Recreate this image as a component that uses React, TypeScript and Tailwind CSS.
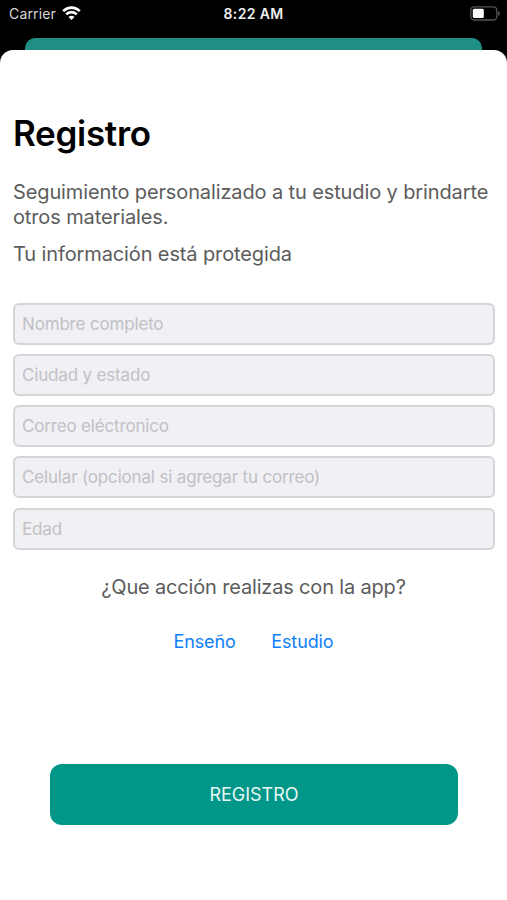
const fields = [
  { name: "name", label: "Nombre completo" },
  { name: "city", label: "Ciudad y estado" },
  { name: "email", label: "Correo eléctronico" },
  { name: "phone", label: "Celular (opcional si agregar tu correo)" },
  { name: "age", label: "Edad" },
];

export default function App() {
  return (
    <div className="flex h-[900px] w-[507px] flex-col overflow-hidden bg-black font-[Inter,sans-serif]">
      <StatusBar />

      {/* Edge of the screen behind the sheet */}
      <div className="mx-[25px] mt-[10px] h-[12px] shrink-0 rounded-t-[10px] bg-[#1f8f83]" />

      <main className="flex-1 rounded-t-[13px] bg-white px-[13px] pt-[61px]">
        <h1 className="text-[35px] leading-[44px] font-semibold tracking-[-0.3px] text-black">Registro</h1>

        <div className="mt-[25px] text-[20px] leading-[24.5px] tracking-[-0.12px] whitespace-nowrap text-[#5c5c5c]">
          <p>
            Seguimiento personalizado a tu estudio y brindarte
            <br />
            otros materiales.
          </p>
          <p className="mt-[13px]">Tu información está protegida</p>
        </div>

        <form>
          <div className="mt-[36px] flex flex-col gap-[9.3px]">
            {fields.map((field) => (
              <Field key={field.name} name={field.name} label={field.label} />
            ))}
          </div>

          <p className="mt-[25.5px] text-center text-[20px] leading-[25px] tracking-[-0.17px] text-[#5c5c5c]">
            ¿Que acción realizas con la app?
          </p>
          <div className="mt-[30px] flex justify-center gap-[35.5px] text-[18px] leading-[24px] tracking-[-0.1px] text-[#0f80fa]">
            <button type="button">Enseño</button>
            <button type="button">Estudio</button>
          </div>

          <button
            type="button"
            className="mx-[37px] mt-[110px] h-[61px] w-[408px] rounded-[12px] bg-[#009688] text-[18px] text-[#e9f7f5]"
          >
            REGISTRO
          </button>
        </form>
      </main>
    </div>
  );
}

function StatusBar() {
  return (
    <header className="grid h-[28px] shrink-0 grid-cols-3 items-center pr-[6px] pb-[2px] pl-[9px] text-white">
      <div className="flex items-center gap-[6px]">
        <span className="text-[14px] tracking-[0.15px] text-[#d8d8d8]">Carrier</span>
        <WifiIcon />
      </div>
      <span className="pr-[3px] text-center text-[14px] font-semibold tracking-[0.35px] text-[#eeeeee]">8:22 AM</span>
      <div className="flex justify-end">
        <BatteryIcon />
      </div>
    </header>
  );
}

function Field({ name, label }: { name: string, label: string }) {
  return (
    <input
      name={name}
      placeholder={label}
      className="h-[42px] w-[482px] rounded-[6px] border-2 border-[#d5d5d7] bg-[#f0f0f5] px-[7px] text-[17px] tracking-[-0.17px] placeholder:text-[#c1c1c5]"
    />
  );
}

function WifiIcon() {
  return (
    <svg width="19" height="14" viewBox="0 0 19 14" fill="none" stroke="white" strokeWidth="2.6">
      <path d="M1.2 5.1C5.9.4 13.1.4 17.8 5.1" />
      <path d="M4.2 8.4C7.2 5.4 11.8 5.4 14.8 8.4" />
      <path d="M9.5 14 6.5 11C8.2 9.4 10.8 9.4 12.5 11Z" fill="white" stroke="none" />
    </svg>
  );
}

function BatteryIcon() {
  return (
    <svg width="31" height="15" viewBox="0 0 31 15" fill="none">
      <rect x="0.8" y="0.8" width="26" height="13.2" rx="3.5" stroke="#555" strokeWidth="1.3" />
      <rect x="2.8" y="2.8" width="11" height="9.2" rx="1.5" fill="white" />
      <path d="M28.2 5V10C30.5 9 30.5 6 28.2 5Z" fill="#555" />
    </svg>
  );
}
